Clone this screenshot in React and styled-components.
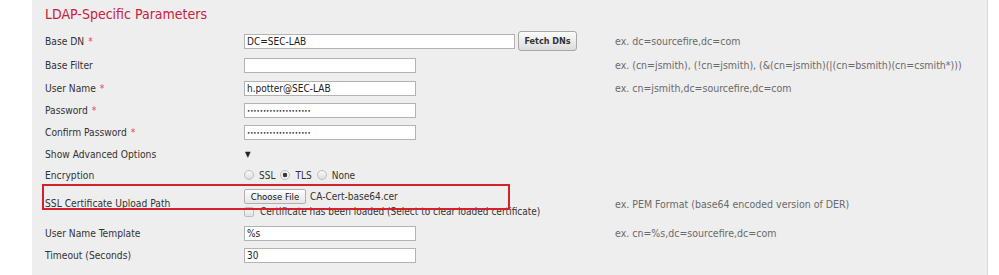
import React from "react";
import styled, { createGlobalStyle } from "styled-components";

const Global = createGlobalStyle`
  html, body { margin: 0; padding: 0; background: #ffffff; }
  body {
    font-family: "DejaVu Sans Condensed", "DejaVu Sans", sans-serif;
    font-stretch: condensed;
  }
`;

const Panel = styled.section`
  margin-left: 32px;
  width: 955px;
  border-right: 1px solid #d9d9d9;
  background: #eeeeee;
  padding-bottom: 24px;
  font-family: "DejaVu Sans Condensed", "DejaVu Sans", sans-serif;
  font-stretch: condensed;
`;

const Title = styled.h3`
  margin: 0;
  height: 29px;
  line-height: 29px;
  padding-left: 13px;
  font-size: 14px;
  font-weight: normal;
  color: #c8203c;
`;

const Row = styled.div`
  position: relative;
  display: grid;
  grid-template-columns: 199px 371px 1fr;
  align-items: center;
  height: ${(p) => p.$h}px;
  padding-left: 13px;
`;

const Label = styled.label`
  font-size: 10.2px;
  color: #333333;
  white-space: nowrap;
`;

const Req = styled.span`
  color: #e2474f;
  margin-left: 4px;
`;

const Hint = styled.span`
  font-size: 10.5px;
  color: #6a6a6a;
  white-space: nowrap;
`;

const Control = styled.div`
  display: flex;
  align-items: center;
  gap: ${(p) => p.$gap ?? 0}px;
`;

const Stack = styled.div`
  display: flex;
  flex-direction: column;
  align-self: start;
  padding-top: 4px;
  gap: 2px;
`;

const TextInput = styled.input`
  box-sizing: border-box;
  width: ${(p) => (p.$wide ? 271 : 172)}px;
  height: 15px;
  margin: 0;
  padding: 0 2px;
  border: 1px solid #b3b3b3;
  border-radius: 0;
  background: #ffffff;
  font-family: "DejaVu Sans Condensed", "DejaVu Sans", sans-serif;
  font-stretch: condensed;
  font-size: ${(p) => (p.type === "password" ? 6 : 10)}px;
  color: #222222;
  outline: none;
`;

const FetchButton = styled.button`
  box-sizing: border-box;
  width: 59px;
  height: 20px;
  margin: 0;
  padding: 0;
  border: 1px solid #a8a8a8;
  border-radius: 3px;
  background: linear-gradient(#fbfbfb, #dcdcdc);
  font-family: "DejaVu Sans Condensed", "DejaVu Sans", sans-serif;
  font-stretch: condensed;
  font-size: 9px;
  font-weight: bold;
  color: #333333;
`;

const Caret = styled.span`
  font-size: 8px;
  color: #222222;
  padding-left: 1px;
`;

const Radio = styled.input.attrs({ type: "radio" })`
  appearance: none;
  box-sizing: border-box;
  width: 10px;
  height: 10px;
  margin: 0;
  border: 1px solid #bdbdbd;
  border-radius: 50%;
  background: linear-gradient(#fafafa, #dedede);
  &:checked {
    background: radial-gradient(circle, #3a3a3a 0 2px, #f4f4f4 2.6px);
  }
`;

const RadioText = styled.span`
  font-size: 10px;
  color: #333333;
  margin: 0 5px 0 5px;
`;

const FileButton = styled.button`
  box-sizing: border-box;
  width: 62px;
  height: 15px;
  margin: 0;
  padding: 0;
  border: 1px solid #b0b0b0;
  border-radius: 2px;
  background: linear-gradient(#fdfdfd, #e6e6e6);
  font-family: "DejaVu Sans Condensed", "DejaVu Sans", sans-serif;
  font-stretch: condensed;
  font-size: 9.5px;
  color: #111111;
`;

const FileName = styled.span`
  font-size: 10px;
  color: #333333;
  margin-left: 4px;
`;

const Check = styled.input.attrs({ type: "checkbox" })`
  appearance: none;
  box-sizing: border-box;
  width: 10px;
  height: 10px;
  margin: 0;
  border: 1px solid #bdbdbd;
  border-radius: 2px;
  background: linear-gradient(#fafafa, #e2e2e2);
`;

const CheckText = styled.span`
  font-size: 10px;
  color: #333333;
  margin-left: 6px;
  white-space: nowrap;
`;

const Highlight = styled.div`
  position: absolute;
  left: 10px;
  top: -1px;
  width: 468px;
  height: 26px;
  box-sizing: border-box;
  border: 2px solid #d4212c;
  pointer-events: none;
`;

const fields = [
  { label: "Base Filter", h: 24, value: "", hint: "ex. (cn=jsmith), (!cn=jsmith), (&(cn=jsmith)(|(cn=bsmith)(cn=csmith*)))" },
  { label: "User Name", req: true, h: 22, value: "h.potter@SEC-LAB", hint: "ex. cn=jsmith,dc=sourcefire,dc=com" },
  { label: "Password", req: true, h: 22, value: "••••••••••••••••••••", type: "password" },
  { label: "Confirm Password", req: true, h: 22, value: "••••••••••••••••••••", type: "password" },
];

export default function App() {
  return (
    <>
      <Global />
      <Panel>
        <Title>LDAP-Specific Parameters</Title>

        <Row $h={24}>
          <Label>Base DN<Req>*</Req></Label>
          <Control $gap={3}>
            <TextInput $wide defaultValue="DC=SEC-LAB" />
            <FetchButton>Fetch DNs</FetchButton>
          </Control>
          <Hint>ex. dc=sourcefire,dc=com</Hint>
        </Row>

        {fields.map((f) => (
          <Row key={f.label} $h={f.h}>
            <Label>
              {f.label}
              {f.req && <Req>*</Req>}
            </Label>
            <Control>
              <TextInput type={f.type || "text"} defaultValue={f.value} />
            </Control>
            <Hint>{f.hint || ""}</Hint>
          </Row>
        ))}

        <Row $h={22}>
          <Label>Show Advanced Options</Label>
          <Control>
            <Caret>▼</Caret>
          </Control>
          <Hint />
        </Row>

        <Row $h={20}>
          <Label>Encryption</Label>
          <Control>
            <Radio name="enc" />
            <RadioText>SSL</RadioText>
            <Radio name="enc" defaultChecked />
            <RadioText>TLS</RadioText>
            <Radio name="enc" />
            <RadioText>None</RadioText>
          </Control>
          <Hint />
        </Row>

        <Row $h={37}>
          <Label>SSL Certificate Upload Path</Label>
          <Stack>
            <Control>
              <FileButton>Choose File</FileButton>
              <FileName>CA-Cert-base64.cer</FileName>
            </Control>
            <Control>
              <Check />
              <CheckText>Certificate has been loaded (Select to clear loaded certificate)</CheckText>
            </Control>
          </Stack>
          <Hint>ex. PEM Format (base64 encoded version of DER)</Hint>
          <Highlight />
        </Row>

        <Row $h={22}>
          <Label>User Name Template</Label>
          <Control>
            <TextInput defaultValue="%s" />
          </Control>
          <Hint>ex. cn=%s,dc=sourcefire,dc=com</Hint>
        </Row>

        <Row $h={22}>
          <Label>Timeout (Seconds)</Label>
          <Control>
            <TextInput defaultValue="30" />
          </Control>
          <Hint />
        </Row>
      </Panel>
    </>
  );
}
